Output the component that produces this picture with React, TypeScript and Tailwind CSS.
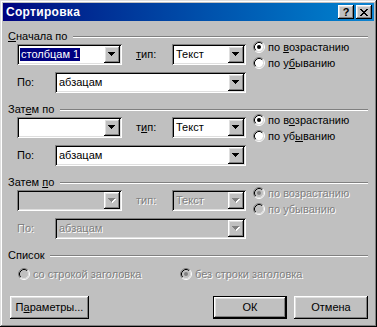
import React from "react";

const raised =
  "shadow-[inset_-1px_-1px_#000,inset_1px_1px_#fff,inset_-2px_-2px_#808080,inset_2px_2px_#dfdfdf]";
const sunken =
  "shadow-[inset_1px_1px_#808080,inset_-1px_-1px_#fff,inset_2px_2px_#000,inset_-2px_-2px_#dfdfdf]";
const dis = "text-[#808080] [text-shadow:1px_1px_0_#fff]";

function U({ children }: { children: React.ReactNode }) {
  return <span className="underline underline-offset-[1px] decoration-1">{children}</span>;
}

function Arrow({ disabled }: { disabled?: boolean }) {
  return (
    <svg width="8" height="5" viewBox="0 0 8 5" shapeRendering="crispEdges">
      {disabled && (
        <g fill="#fff">
          <rect x="1" y="1" width="7" height="1" />
          <rect x="2" y="2" width="5" height="1" />
          <rect x="3" y="3" width="3" height="1" />
          <rect x="4" y="4" width="1" height="1" />
        </g>
      )}
      <g fill={disabled ? "#808080" : "#000"}>
        <rect x="0" y="0" width="7" height="1" />
        <rect x="1" y="1" width="5" height="1" />
        <rect x="2" y="2" width="3" height="1" />
        <rect x="3" y="3" width="1" height="1" />
      </g>
    </svg>
  );
}

function Combo({
  className,
  text,
  selected,
  disabled,
}: {
  className: string;
  text?: string;
  selected?: boolean;
  disabled?: boolean;
}) {
  return (
    <div
      className={`h-[21px] flex items-stretch p-[2px] ${sunken} ${
        disabled ? "bg-[#c0c0c0]" : "bg-white"
      } ${className}`}
    >
      <div className="flex-1 flex items-center pl-[1px] overflow-hidden whitespace-nowrap">
        {text && (
          <span
            className={`px-[1px] leading-[13px] ${
              selected ? "bg-[#000080] text-white" : disabled ? dis : ""
            }`}
          >
            {text}
          </span>
        )}
      </div>
      <div
        className={`w-[16px] h-[17px] bg-[#c0c0c0] flex items-center justify-center ${raised}`}
      >
        <Arrow disabled={disabled} />
      </div>
    </div>
  );
}

function Radio({ checked, disabled }: { checked?: boolean; disabled?: boolean }) {
  return (
    <svg width="12" height="12" viewBox="0 0 12 12" className="shrink-0">
      <circle cx="6" cy="6" r="4.2" fill={disabled ? "#c0c0c0" : "#fff"} />
      <path d="M2.11,9.89 A5.5,5.5 0 0 1 9.89,2.11" stroke="#808080" fill="none" />
      <path d="M9.89,2.11 A5.5,5.5 0 0 1 2.11,9.89" stroke="#fff" fill="none" />
      <path d="M2.82,9.18 A4.5,4.5 0 0 1 9.18,2.82" stroke="#000" fill="none" />
      <path d="M9.18,2.82 A4.5,4.5 0 0 1 2.82,9.18" stroke="#dfdfdf" fill="none" />
      {checked && <circle cx="6" cy="6" r="2" fill={disabled ? "#808080" : "#000"} />}
    </svg>
  );
}

function Header({
  children,
  className,
  labelW,
}: {
  children: React.ReactNode;
  className: string;
  labelW: string;
}) {
  return (
    <div className={`flex items-center h-[13px] ${className}`}>
      <span className={`whitespace-nowrap shrink-0 ${labelW}`}>{children}</span>
      <div className="flex-1 h-[2px] border-t border-t-[#808080] border-b border-b-white" />
    </div>
  );
}

function Btn({
  children,
  className,
  def,
}: {
  children: React.ReactNode;
  className: string;
  def?: boolean;
}) {
  return (
    <div
      className={`h-[23px] flex items-center justify-center bg-[#c0c0c0] ${
        def
          ? "shadow-[inset_0_0_0_1px_#000,inset_-2px_-2px_#000,inset_2px_2px_#fff,inset_-3px_-3px_#808080,inset_3px_3px_#dfdfdf]"
          : raised
      } ${className}`}
    >
      {children}
    </div>
  );
}

export default function App() {
  return (
    <div className="w-[377px] h-[327px] bg-[#c0c0c0] p-[3px] flex flex-col text-[11px] leading-[13px] text-black font-['Liberation_Sans',Arial,sans-serif] shadow-[inset_-1px_-1px_#000,inset_1px_1px_#dfdfdf,inset_-2px_-2px_#808080,inset_2px_2px_#fff] select-none">
      {/* Title bar */}
      <div className="h-[18px] flex items-center bg-linear-to-r from-[#000080] to-[#1084d0] pl-[3px] pr-[2px]">
        <span className="font-bold text-white text-[12px] tracking-[0.3px]">Сортировка</span>
        <div className="ml-auto flex gap-[2px]">
          <div className={`w-[16px] h-[14px] bg-[#c0c0c0] flex items-center justify-center font-bold text-[11px] leading-[11px] ${raised}`}>
            ?
          </div>
          <div className={`w-[16px] h-[14px] bg-[#c0c0c0] flex items-center justify-center ${raised}`}>
            <svg width="8" height="7" viewBox="0 0 8 7" shapeRendering="crispEdges">
              <path
                d="M0 0h2v1H0zM6 0h2v1H6zM1 1h2v1H1zM5 1h2v1H5zM2 2h4v1H2zM3 3h2v1H3zM2 4h4v1H2zM1 5h2v1H1zM5 5h2v1H5zM0 6h2v1H0zM6 6h2v1H6z"
                fill="#000"
              />
            </svg>
          </div>
        </div>
      </div>

      <div className="flex flex-col pl-[5px] pr-[6px]">
        {/* Group 1 */}
        <Header className="mt-[9px]" labelW="w-[65px]">
          <U>С</U>начала по
        </Header>
        <div className="flex pl-[9px] mt-[1px]">
          <div className="w-[229px] flex flex-col gap-[7px]">
            <div className="flex items-center h-[21px]">
              <Combo className="w-[105px]" text="столбцам 1" selected />
              <span className="ml-[14px]">
                <U>т</U>ип:
              </span>
              <Combo className="w-[74px] ml-auto" text="Текст" />
            </div>
            <div className="flex items-center h-[21px]">
              <span>По:</span>
              <Combo className="w-[191px] ml-auto" text="абзацам" />
            </div>
          </div>
          <div className="ml-[7px] mt-[-5px] flex flex-col">
            <div className="h-[16px] flex items-center gap-[3px]">
              <Radio checked />
              <span>
                по <U>в</U>озрастанию
              </span>
            </div>
            <div className="h-[16px] flex items-center gap-[3px]">
              <Radio />
              <span>
                по у<U>б</U>ыванию
              </span>
            </div>
          </div>
        </div>

        {/* Group 2 */}
        <Header className="mt-[10px]" labelW="w-[52px]">
          Зат<U>е</U>м по
        </Header>
        <div className="flex pl-[9px] mt-[1px]">
          <div className="w-[229px] flex flex-col gap-[7px]">
            <div className="flex items-center h-[21px]">
              <Combo className="w-[105px]" />
              <span className="ml-[14px]">
                т<U>и</U>п:
              </span>
              <Combo className="w-[74px] ml-auto" text="Текст" />
            </div>
            <div className="flex items-center h-[21px]">
              <span>По:</span>
              <Combo className="w-[191px] ml-auto" text="абзацам" />
            </div>
          </div>
          <div className="ml-[7px] mt-[-5px] flex flex-col">
            <div className="h-[16px] flex items-center gap-[3px]">
              <Radio checked />
              <span>
                по в<U>о</U>зрастанию
              </span>
            </div>
            <div className="h-[16px] flex items-center gap-[3px]">
              <Radio />
              <span>
                по уб<U>ы</U>ванию
              </span>
            </div>
          </div>
        </div>

        {/* Group 3 (disabled) */}
        <Header className="mt-[10px]" labelW="w-[52px]">
          Затем <U>п</U>о
        </Header>
        <div className="flex pl-[9px] mt-[1px]">
          <div className="w-[229px] flex flex-col gap-[7px]">
            <div className="flex items-center h-[21px]">
              <Combo className="w-[105px]" disabled />
              <span className={`ml-[14px] ${dis}`}>тип:</span>
              <Combo className="w-[74px] ml-auto" text="Текст" disabled />
            </div>
            <div className="flex items-center h-[21px]">
              <span className={dis}>По:</span>
              <Combo className="w-[191px] ml-auto" text="абзацам" disabled />
            </div>
          </div>
          <div className="ml-[7px] mt-[-5px] flex flex-col">
            <div className="h-[16px] flex items-center gap-[3px]">
              <Radio checked disabled />
              <span className={dis}>по возрастанию</span>
            </div>
            <div className="h-[16px] flex items-center gap-[3px]">
              <Radio disabled />
              <span className={dis}>по убыванию</span>
            </div>
          </div>
        </div>

        {/* Список */}
        <Header className="mt-[10px]" labelW="w-[42px]">
          Список
        </Header>
        <div className="flex items-center h-[16px] mt-[4px] pl-[10px]">
          <div className="w-[162px] flex items-center gap-[3px]">
            <Radio disabled />
            <span className={dis}>со строкой заголовка</span>
          </div>
          <div className="flex items-center gap-[3px]">
            <Radio checked disabled />
            <span className={dis}>без строки заголовка</span>
          </div>
        </div>

        {/* Buttons */}
        <div className="flex mt-[14px]">
          <Btn className="w-[79px] ml-[2px]">
            <span>
              П<U>а</U>раметры...
            </span>
          </Btn>
          <Btn className="w-[74px] ml-auto" def>
            ОК
          </Btn>
          <Btn className="w-[74px] ml-[7px]">Отмена</Btn>
        </div>
      </div>
    </div>
  );
}
